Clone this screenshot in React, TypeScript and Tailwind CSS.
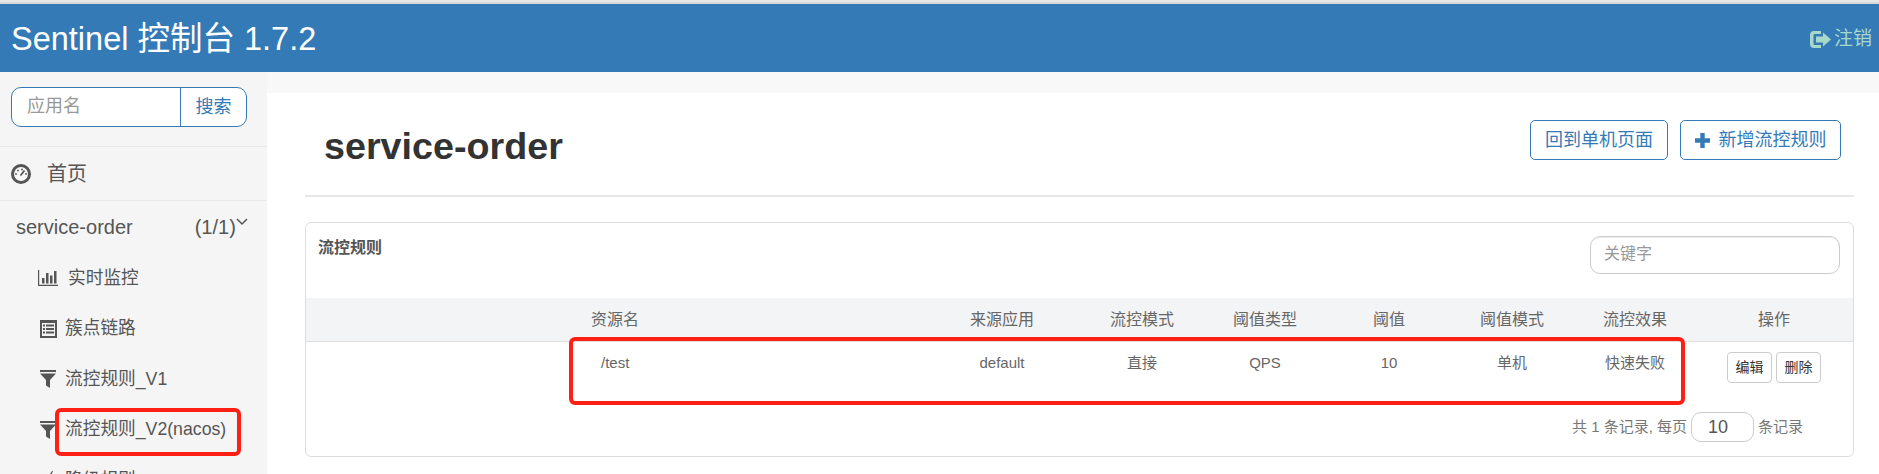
const sans = "font-['Liberation_Sans','Noto_Sans_CJK_SC',sans-serif]";

const GaugeIcon = () => (
  <svg width="20" height="20" viewBox="0 0 20 20">
    <circle cx="10" cy="10" r="8.500" fill="#f8f8f8" stroke="#555" strokeWidth="3" />
    <circle cx="5" cy="10" r="0.900" fill="#555" />
    <circle cx="7" cy="6.500" r="0.900" fill="#555" />
    <circle cx="11" cy="5.500" r="0.900" fill="#555" />
    <circle cx="15" cy="10" r="0.900" fill="#555" />
    <path d="M9.500 11.500 L13.500 6.500" stroke="#555" strokeWidth="1.800" />
  </svg>
);

const StatsIcon = () => (
  <svg width="20" height="16" viewBox="0 0 20 16" fill="#555">
    <path d="M0 0h1.200v14.800H20V16H0z" />
    <rect x="4" y="8" width="2.500" height="5.500" />
    <rect x="8" y="3" width="2.500" height="10.500" />
    <rect x="12" y="5.500" width="2.500" height="8" />
    <rect x="16" y="1" width="2.500" height="12.500" />
  </svg>
);

const ListIcon = () => (
  <svg width="17" height="18" viewBox="0 0 17 18" fill="#555">
    <path fillRule="evenodd" d="M0 0h17v18H0zM2 3v13h13V3z" />
    <rect x="3" y="4.500" width="2" height="2" />
    <rect x="6" y="4.500" width="8" height="2" />
    <rect x="3" y="8" width="2" height="2" />
    <rect x="6" y="8" width="8" height="2" />
    <rect x="3" y="11.500" width="2" height="2" />
    <rect x="6" y="11.500" width="8" height="2" />
  </svg>
);

const FilterIcon = () => (
  <svg width="16" height="18" viewBox="0 0 16 18" fill="#555">
    <rect x="0" y="0" width="16" height="2" />
    <path d="M0 3.500h16L10 10v8l-4-2.500V10z" />
  </svg>
);

const BoltIcon = () => (
  <svg width="16" height="19" viewBox="0 0 16 19" fill="#555">
    <path d="M12 0 L6 9 H10 L4 19 L14 7 H10 L13 0z" />
  </svg>
);

const LogoutIcon = () => (
  <svg width="21" height="17" viewBox="0 0 21 17" fill="#a8d8c8">
    <path d="M4 0h7v3H5C4 3 3.500 3.500 3.500 4.500v8c0 1 .5 1.500 1.500 1.500h6v3H4c-2.400 0-4-1.600-4-4V4c0-2.400 1.600-4 4-4z" />
    <path d="M6 5.500h7V1.500l8 7-8 7v-4H6z" />
  </svg>
);

const PlusIcon = () => (
  <svg width="15" height="15" viewBox="0 0 15 15" fill="#337ab7">
    <path d="M5.300 0h4.400v5.300H15v4.400H9.700V15H5.300V9.700H0V5.300h5.300z" />
  </svg>
);

const navItems = [
  { label: "实时监控", icon: <StatsIcon />, iconBox: "w-[30px]" },
  { label: "簇点链路", icon: <ListIcon />, iconBox: "w-[27px] pl-[2px]" },
  { label: "流控规则_V1", icon: <FilterIcon />, iconBox: "w-[27px] pl-[2px]" },
  { label: "流控规则_V2(nacos)", icon: <FilterIcon />, iconBox: "w-[27px] pl-[2px]" },
  { label: "降级规则", icon: <BoltIcon />, iconBox: "w-[27px] pl-[2px]" },
];

const Sidebar = () => (
  <aside className="w-[267px] shrink-0 bg-[#f5f5f5] text-[#555]">
    <div className="px-[11px] pt-[15px] pb-[19px] border-b border-[#e7e7e7]">
      <div className="flex h-[40px] w-[236px] rounded-[10px] border border-[#337ab7] bg-white overflow-hidden">
        <div className="flex-1 pl-[15px] text-[18px] leading-[36px] text-[#999]">应用名</div>
        <div className="w-[66px] border-l border-[#337ab7] text-center text-[18px] leading-[38px] text-[#337ab7]">搜索</div>
      </div>
    </div>
    <div className="flex h-[54px] items-center gap-[16px] pl-[11px] border-b border-[#e7e7e7] text-[20px]">
      <GaugeIcon />
      <span>首页</span>
    </div>
    <div className="flex h-[50px] items-center pl-[16px] pt-[2px] text-[20px]">
      <span>service-order</span>
      <span className="ml-[62px]">(1/1)</span>
      <svg width="12" height="8" viewBox="0 0 12 8" className="mb-[10px]" fill="none" stroke="#555" strokeWidth="1.500">
        <path d="M1 1l5 5 5-5" />
      </svg>
    </div>
    <ul className="pl-[38px] pt-[2px] text-[17.700px]">
      {navItems.map((item) => (
        <li key={item.label} className="flex h-[50.500px] items-center">
          <span className={`${item.iconBox} flex justify-start`}>{item.icon}</span>
          <span className="whitespace-nowrap">{item.label}</span>
        </li>
      ))}
    </ul>
  </aside>
);

const columns = [
  { label: "来源应用", value: "default", width: "w-[140px]" },
  { label: "流控模式", value: "直接", width: "w-[140px]" },
  { label: "阈值类型", value: "QPS", width: "w-[106px]" },
  { label: "阈值", value: "10", width: "w-[142px]" },
  { label: "阈值模式", value: "单机", width: "w-[104px]" },
  { label: "流控效果", value: "快速失败", width: "w-[142px]" },
];

const RulesPanel = () => (
  <div className="mt-[25px] rounded-[6px] border border-[#ddd] bg-white h-[235px] overflow-hidden">
    <div className="flex h-[75px] justify-between pl-[12px] pr-[13px] pt-[13px]">
      <h3 className="text-[16px] font-bold leading-[24px] text-[#555]">流控规则</h3>
      <div className="h-[38px] w-[250px] rounded-[10px] border border-[#ccc] pl-[13px] text-[16px] leading-[34px] text-[#999] shadow-[inset_0_1px_1px_rgba(0,0,0,0.075)]">
        关键字
      </div>
    </div>
    <table className="w-full table-fixed border-collapse">
      <thead>
        <tr className="h-[43px] bg-[#f3f4f6] border-b border-[#ddd] text-[16px] text-[#666]">
          <th className="w-[275px] font-normal"></th>
          <th className="pl-[10px] pt-[2px] text-left font-normal">资源名</th>
          {columns.map((col) => (
            <th key={col.label} className={`${col.width} pt-[2px] font-normal`}>{col.label}</th>
          ))}
          <th className="w-[136px] pt-[2px] font-normal">操作</th>
          <th className="w-[11px] font-normal"></th>
        </tr>
      </thead>
      <tbody>
        <tr className="h-[60px] text-[15px] text-[#666] align-top">
          <td></td>
          <td className="pl-[20px] pt-[10px]">/test</td>
          {columns.map((col) => (
            <td key={col.label} className="pt-[10px] text-center">{col.value}</td>
          ))}
          <td className="pt-[10px]">
            <div className="flex justify-center gap-[4px]">
              <button className="h-[31px] w-[45px] rounded-[4px] border border-[#ccc] text-[14px] text-[#333]">编辑</button>
              <button className="h-[31px] w-[45px] rounded-[4px] border border-[#ccc] text-[14px] text-[#333]">删除</button>
            </div>
          </td>
          <td></td>
        </tr>
      </tbody>
    </table>
    <div className="flex h-[30px] mt-[11px] items-center justify-end gap-[4px] pr-[50px] text-[15px] text-[#777]">
      <span>共 1 条记录, 每页</span>
      <div className="h-[30px] w-[63px] rounded-[10px] border border-[#ccc] pl-[16px] text-[18px] leading-[28px] text-[#555]">10</div>
      <span>条记录</span>
    </div>
  </div>
);

const App = () => (
  <div className={`relative h-[474px] w-[1879px] overflow-hidden bg-white ${sans}`}>
    <div className="h-[2px] bg-[#e8e8e8]" />
    <div className="h-[2px] bg-[#d8d8d8]" />
    <header className="flex h-[68px] items-start justify-between bg-[#337ab7] pl-[11px] pr-[7px] pt-[15px]">
      <h1 className="text-[32.500px] leading-[40px] text-white">Sentinel 控制台 1.7.2</h1>
      <div className="mt-[8px] flex items-center gap-[3px] text-[19px] leading-[24px] text-[#a8d8c8]">
        <LogoutIcon />
        <span>注销</span>
      </div>
    </header>
    <div className="flex">
      <Sidebar />
      <main className="flex-1 bg-[#f8f8f8] pt-[21px]">
        <div className="h-[400px] bg-white pl-[38px] pr-[25px]">
          <div className="flex h-[104px] justify-between border-b-2 border-[#e7e7e7] pr-[13px]">
            <h2 className="pl-[19px] pt-[28px] text-[37.700px] font-bold leading-[50px] text-[#333]">service-order</h2>
            <div className="flex gap-[12px] pt-[27px]">
              <button className="h-[40px] w-[138px] rounded-[5px] border border-[#337ab7] text-[18px] text-[#337ab7]">回到单机页面</button>
              <button className="flex h-[40px] w-[161px] items-center justify-center gap-[9px] rounded-[5px] border border-[#337ab7] text-[18px] text-[#337ab7]">
                <PlusIcon />
                新增流控规则
              </button>
            </div>
          </div>
          <RulesPanel />
        </div>
      </main>
    </div>
    <div className="absolute left-[569px] top-[337px] h-[68px] w-[1116px] rounded-[6px] border-[4px] border-[#ff2015]" />
    <div className="absolute left-[55px] top-[408px] h-[48px] w-[186px] rounded-[6px] border-[4px] border-[#ff2015]" />
  </div>
);

export default App;
